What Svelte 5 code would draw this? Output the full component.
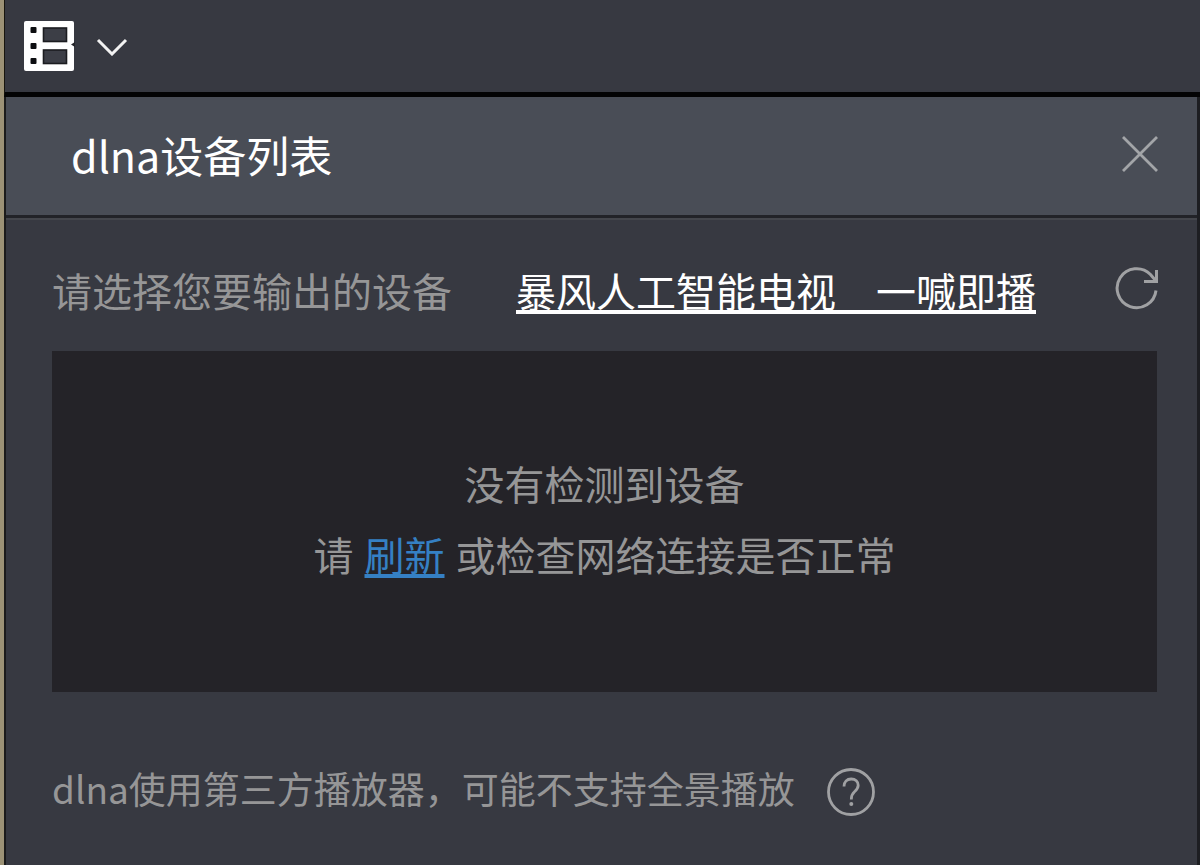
<script lang="ts">
  let open = $state(true);
</script>

<div class="window">
  <header class="toolbar">
    <button class="menu" type="button" aria-label="菜单">
      <svg width="52" height="52" viewBox="0 0 52 52" aria-hidden="true">
        <rect x="1" y="1" width="50" height="50" rx="2" fill="#fff" />
        <g fill="#0c0d10">
          <rect x="7.500" y="7" width="6" height="6" rx="1" />
          <rect x="7.500" y="23" width="6" height="6" rx="1" />
          <rect x="7.500" y="38" width="6" height="6" rx="1" />
        </g>
        <g fill="#3c3e46" stroke="#1b1c20" stroke-width="1.600">
          <rect x="20.500" y="8" width="23" height="13.500" />
          <rect x="20.500" y="30" width="23" height="13.500" />
        </g>
        <path d="M52 22 L48 24.500 L52 27 Z" fill="#24252a" />
      </svg>
      <svg width="32" height="20" viewBox="0 0 32 20" aria-hidden="true">
        <path d="M2 4 L16 18 L30 4" fill="none" stroke="#f2f2f2" stroke-width="3" />
      </svg>
    </button>
  </header>

  {#if open}
    <section class="panel" aria-labelledby="title">
      <div class="title-bar">
        <h1 id="title">dlna设备列表</h1>
        <button type="button" aria-label="关闭" onclick={() => (open = false)}>
          <svg width="36" height="36" viewBox="0 0 36 36" aria-hidden="true">
            <path d="M1 1 L35 35 M35 1 L1 35" fill="none" stroke="#a3a5a8" stroke-width="2.800" />
          </svg>
        </button>
      </div>

      <div class="content">
        <div class="prompt">
          <span>请选择您要输出的设备</span>
          <a class="promo" href="#tv">暴风人工智能电视　一喊即播</a>
          <button class="reload" type="button" aria-label="刷新设备">
            <svg width="44" height="44" viewBox="0 0 44 44" aria-hidden="true">
              <g fill="none" stroke="#a0a1a3" stroke-width="3">
                <path d="M41 24.500 A19.500 19.500 0 1 1 35.500 8.500 L41 15" />
                <path d="M41.500 4 V15.500 H29" />
              </g>
            </svg>
          </button>
        </div>

        <div class="devices">
          <p>没有检测到设备</p>
          <p class="hint"><span>请</span><a href="#refresh">刷新</a><span>或检查网络连接是否正常</span></p>
        </div>

        <footer>
          <span>dlna使用第三方播放器，可能不支持全景播放</span>
          <button type="button" aria-label="帮助">
            <svg width="48" height="48" viewBox="0 0 48 48" aria-hidden="true">
              <g fill="none" stroke="#a0a1a3" stroke-width="2.800">
                <circle cx="24" cy="24" r="22.500" />
                <path d="M17 18.500 C17 13.500 20 11 24.200 11 C28.500 11 31.200 13.700 31.200 17.300 C31.200 20.500 29.500 22 27.500 23.700 C25.200 25.700 24.300 27 24.300 31.500" />
              </g>
              <circle cx="24.300" cy="36" r="2" fill="#a0a1a3" />
            </svg>
          </button>
        </footer>
      </div>
    </section>
  {/if}
</div>

<style>
  :global(body) {
    margin: 0;
    background: #373941;
  }

  .window {
    box-sizing: border-box;
    display: flex;
    flex-direction: column;
    min-height: 100vh;
    border-left: 4px solid #9c9276;
    background: #373941;
    color: #969697;
    font-family: "Noto Sans CJK SC", sans-serif;
    font-size: 40px;
    line-height: 60px;
  }

  button {
    display: flex;
    padding: 0;
    border: 0;
    background: none;
    cursor: pointer;
  }

  svg {
    display: block;
  }

  .toolbar {
    display: flex;
    align-items: center;
    height: 92px;
    padding-left: 18px;
    border-bottom: 5px solid #030304;
    border-left: 1px solid #18160f;
  }

  .menu {
    align-items: center;
    gap: 21px;
  }

  .panel {
    flex: 1;
    border-left: 2px solid #1b1b1b;
    border-right: 3px solid #1d1e22;
  }

  .title-bar {
    display: flex;
    align-items: center;
    justify-content: space-between;
    height: 114px;
    padding: 0 39px 4px 65px;
    border-bottom: 3px solid #222328;
    background: #494d56;
  }

  h1 {
    margin: 0;
    color: #fff;
    font-size: 43px;
    font-weight: 400;
  }

  .content {
    padding: 40px 40px 32px 46px;
    border-top: 2px solid #44464c;
  }

  .prompt {
    display: flex;
    align-items: center;
    height: 60px;
    margin-right: -2px;
  }

  a {
    text-decoration-thickness: 4px;
    text-underline-offset: 3px;
    text-decoration-skip-ink: none;
  }

  .promo {
    margin-left: 64px;
    color: #fff;
  }

  .reload {
    margin-left: auto;
    margin-bottom: 4px;
  }

  .devices {
    display: flex;
    flex-direction: column;
    align-items: center;
    justify-content: center;
    gap: 11px;
    height: 335px;
    margin-top: 31px;
    padding-bottom: 6px;
    background: #242328;
  }

  p {
    margin: 0;
  }

  .hint {
    display: flex;
    gap: 11px;
  }

  .hint a {
    color: #3580c4;
  }

  footer {
    display: flex;
    align-items: center;
    gap: 32px;
    margin-top: 66px;
    font-size: 37px;
  }

  footer button {
    margin-top: 8px;
  }
</style>
